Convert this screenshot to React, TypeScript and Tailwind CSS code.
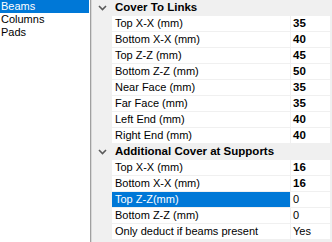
import React from 'react';

type Row = { name: string; value: string; bold?: boolean; selected?: boolean };
type Section = { title: string; rows: Row[] };

const sections: Section[] = [
  {
    title: 'Cover To Links',
    rows: [
      { name: 'Top X-X (mm)', value: '35', bold: true },
      { name: 'Bottom X-X (mm)', value: '40', bold: true },
      { name: 'Top Z-Z (mm)', value: '45', bold: true },
      { name: 'Bottom Z-Z (mm)', value: '50', bold: true },
      { name: 'Near Face (mm)', value: '35', bold: true },
      { name: 'Far Face (mm)', value: '35', bold: true },
      { name: 'Left End (mm)', value: '40', bold: true },
      { name: 'Right End (mm)', value: '40', bold: true },
    ],
  },
  {
    title: 'Additional Cover at Supports',
    rows: [
      { name: 'Top X-X (mm)', value: '16', bold: true },
      { name: 'Bottom X-X (mm)', value: '16', bold: true },
      { name: 'Top Z-Z(mm)', value: '0', selected: true },
      { name: 'Bottom Z-Z (mm)', value: '0' },
      { name: 'Only deduct if beams present', value: 'Yes' },
    ],
  },
];

const items = ['Beams', 'Columns', 'Pads'];

function Chevron() {
  return (
    <svg width="9" height="6" viewBox="0 0 9 6" className="block">
      <path d="M1 1 L4.5 4.5 L8 1" stroke="#5a5a5a" strokeWidth="1.6" fill="none" />
    </svg>
  );
}

export default function App() {
  return (
    <div
      className="flex w-[332px] h-[242px] bg-white text-[11px] leading-none text-black overflow-hidden"
      style={{ fontFamily: '"Liberation Sans", Arial, sans-serif' }}
    >
      {/* list box */}
      <div className="w-[90px] h-full bg-white flex flex-col">
        {items.map((it, i) => (
          <div
            key={it}
            className={
              i === 0
                ? 'h-[13px] w-[89px] flex items-center pl-[1px] bg-[#0078d7] text-white'
                : 'h-[13px] flex items-center pl-[1px]'
            }
          >
            {it}
          </div>
        ))}
      </div>
      {/* splitter */}
      <div className="w-[1px] h-full bg-[#a0a0a0]" />
      <div className="w-[1px] h-full bg-[#d8d8d8]" />

      {/* property grid */}
      <div className="flex-1 h-full bg-[#f0f0f0] flex flex-col">
        {sections.map((s) => (
          <div key={s.title} className="flex flex-col">
            <div className="h-[16px] flex items-center">
              <div className="w-[20px] flex justify-center pl-[1px]">
                <Chevron />
              </div>
              <span className="font-bold pl-[3px] text-[11.5px]">{s.title}</span>
            </div>
            {s.rows.map((r) => (
              <div key={r.name + r.value} className="h-[16px] flex pl-[20px]">
                <div
                  className={
                    r.selected
                      ? 'w-[178px] h-[15px] flex items-center pl-[3px] bg-[#0078d7] text-white'
                      : 'w-[178px] h-[15px] flex items-center pl-[3px] bg-white'
                  }
                >
                  <span className="whitespace-nowrap">{r.name}</span>
                </div>
                <div
                  className={
                    r.bold
                      ? 'ml-[1px] w-[39px] h-[15px] flex items-center pl-[2px] bg-white font-bold text-[11.5px]'
                      : 'ml-[1px] w-[39px] h-[15px] flex items-center pl-[2px] bg-white'
                  }
                >
                  {r.value}
                </div>
              </div>
            ))}
          </div>
        ))}
      </div>
    </div>
  );
}
